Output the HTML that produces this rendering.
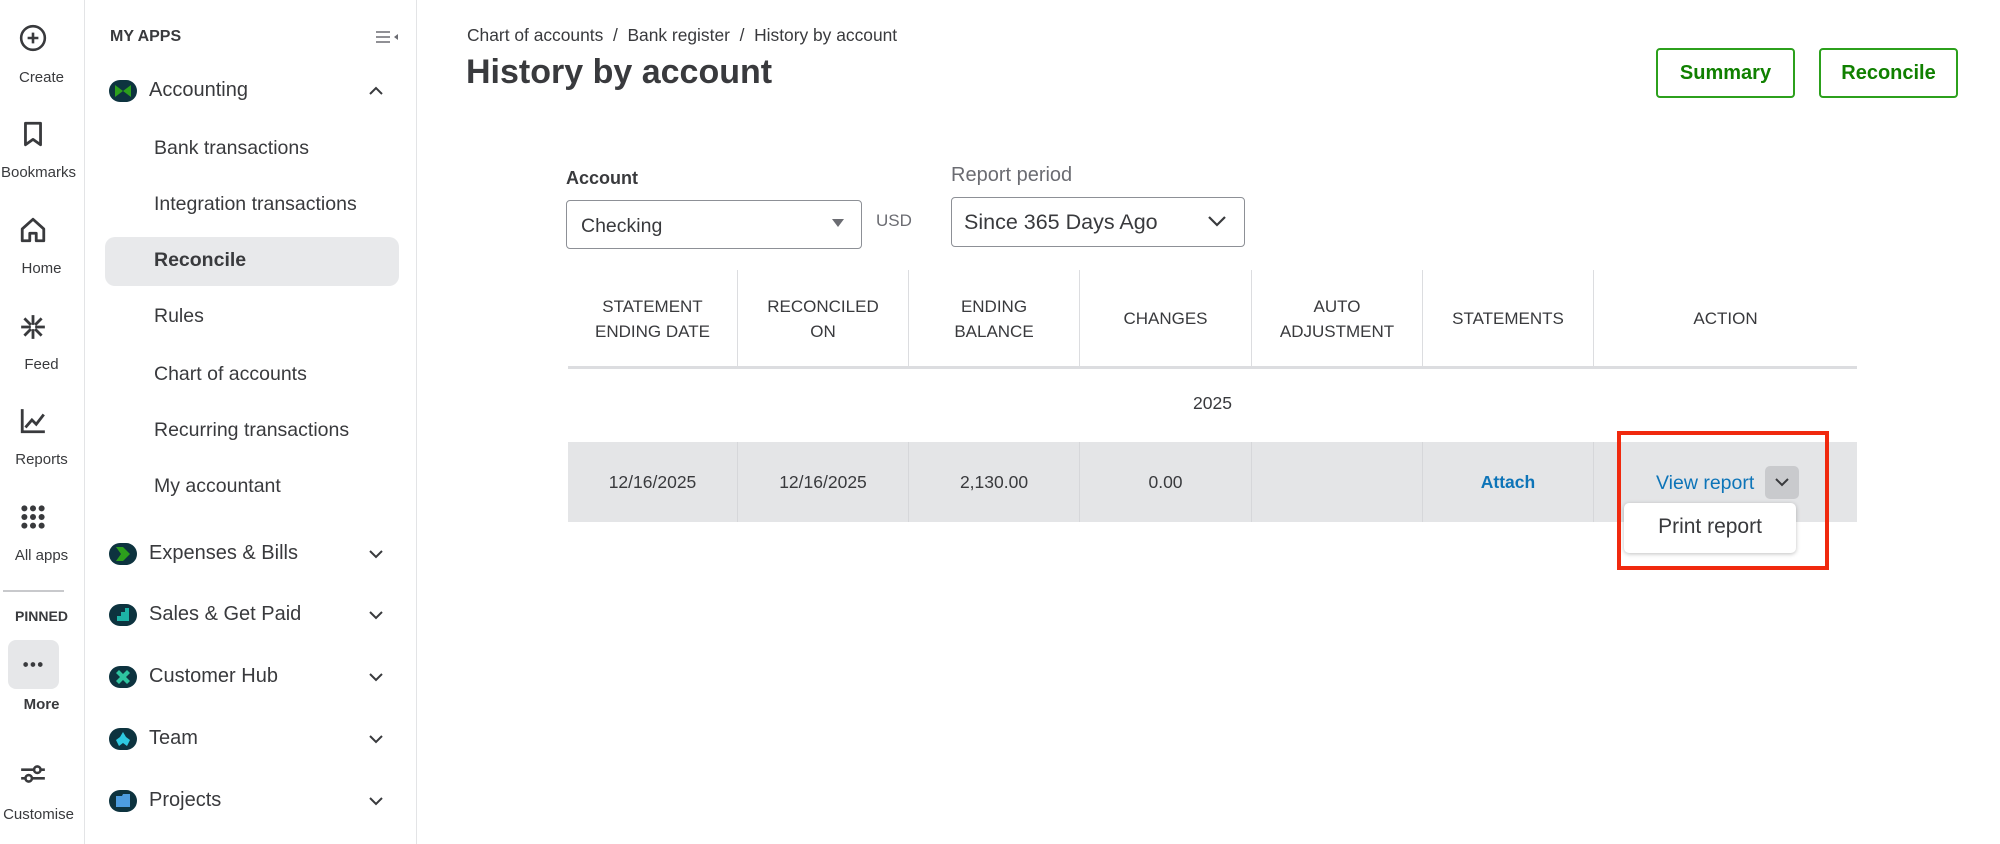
<!DOCTYPE html>
<html><head><meta charset="utf-8"><style>
*{box-sizing:border-box;margin:0;padding:0}
body{width:2000px;height:844px;background:#fff;font-family:"Liberation Sans",sans-serif;color:#393a3d;position:relative;overflow:hidden}
.abs{position:absolute}
.rail{left:0;top:0;width:85px;height:844px;border-right:1px solid #e3e4e6;background:#fff}
.rl{position:absolute;width:85px;text-align:center;font-size:15px;color:#393a3d;left:-1px}
.ic{position:absolute;left:19px;width:28px;height:28px}
.side{left:86px;top:0;width:331px;height:844px;border-right:1px solid #e3e4e6}
.si{position:absolute;left:154px;font-size:19.5px;color:#393a3d}
.app{position:absolute;left:149px;font-size:20px;color:#393a3d}
.dot{position:absolute;left:109px;width:28px;height:22px;border-radius:11px;background:#0d333f}
.chev{position:absolute;left:368px;width:16px;height:10px}
.th{position:absolute;top:270px;height:97px;display:flex;align-items:center;justify-content:center;text-align:center;font-size:17px;line-height:25px;color:#393a3d;border-left:1px solid #dcdde0}
.td{position:absolute;top:442px;height:80px;display:flex;align-items:center;justify-content:center;font-size:17.5px;color:#393a3d;border-left:1px solid #d6d7da}
.btn{position:absolute;top:48px;height:50px;width:139px;border:2px solid #2ca01c;border-radius:4px;color:#108000;font-weight:bold;font-size:20px;display:flex;align-items:center;justify-content:center}
</style></head><body>
<div class="abs rail">
 <svg class="ic" style="top:24px" viewBox="0 0 26 26"><circle cx="13" cy="13" r="11" fill="none" stroke="#393a3d" stroke-width="2.4"/><path d="M13 8v10M8 13h10" stroke="#393a3d" stroke-width="2.4"/></svg>
 <div class="rl" style="top:69px">Create</div>
 <svg class="ic" style="top:120px" viewBox="0 0 26 26"><path d="M6 3h14v20l-7-5-7 5z" fill="none" stroke="#393a3d" stroke-width="2.6" stroke-linejoin="round"/></svg>
 <div class="rl" style="top:164px;left:-4px">Bookmarks</div>
 <svg class="ic" style="top:216px" viewBox="0 0 26 26"><path d="M3 12L13 3l10 9v11h-7v-7h-6v7H3z" fill="none" stroke="#393a3d" stroke-width="2.6" stroke-linejoin="round"/></svg>
 <div class="rl" style="top:260px">Home</div>
 <svg class="ic" style="top:313px" viewBox="0 0 26 26"><path d="M13 2v9M13 15v9M2 13h9M15 13h9M5 5l6 6M21 5l-6 6M5 21l6-6M21 21l-6-6" stroke="#393a3d" stroke-width="2.6"/></svg>
 <div class="rl" style="top:356px">Feed</div>
 <svg class="ic" style="top:407px" viewBox="0 0 26 26"><path d="M3 2v21h21M6 19l6-7 4 4 7-9" fill="none" stroke="#393a3d" stroke-width="2.6"/></svg>
 <div class="rl" style="top:451px">Reports</div>
 <svg class="ic" style="top:503px" viewBox="0 0 26 26"><g fill="#393a3d"><circle cx="5" cy="5" r="2.8"/><circle cx="13" cy="5" r="2.8"/><circle cx="21" cy="5" r="2.8"/><circle cx="5" cy="13" r="2.8"/><circle cx="13" cy="13" r="2.8"/><circle cx="21" cy="13" r="2.8"/><circle cx="5" cy="21" r="2.8"/><circle cx="13" cy="21" r="2.8"/><circle cx="21" cy="21" r="2.8"/></g></svg>
 <div class="rl" style="top:547px">All apps</div>
 <div class="abs" style="left:3px;top:590px;width:61px;height:2px;background:#c8c9cc"></div>
 <div class="rl" style="top:608px;font-weight:bold;font-size:14px">PINNED</div>
 <div class="abs" style="left:8px;top:640px;width:51px;height:49px;border-radius:8px;background:#e6e7e9"></div>
 <div class="abs" style="left:22px;top:662px;width:22px;height:5px;background:radial-gradient(circle,#393a3d 2.2px,transparent 2.5px) 0 0/7.3px 5px repeat-x"></div>
 <div class="rl" style="top:696px;font-weight:bold">More</div>
 <svg class="ic" style="top:760px" viewBox="0 0 26 26"><path d="M2 9h22M2 17h22" stroke="#393a3d" stroke-width="2.4"/><circle cx="17" cy="9" r="3" fill="#fff" stroke="#393a3d" stroke-width="2.4"/><circle cx="9" cy="17" r="3" fill="#fff" stroke="#393a3d" stroke-width="2.4"/></svg>
 <div class="rl" style="top:806px;left:-4px">Customise</div>
</div>
<div class="abs side"></div>
<div class="abs" style="left:110px;top:28px;font-size:16px;font-weight:bold;color:#393a3d">MY APPS</div>
<svg class="abs" style="left:376px;top:30px" width="22" height="14" viewBox="0 0 22 14"><path d="M0 2h14M0 7h14M0 12h14" stroke="#6b6c72" stroke-width="1.6"/><path d="M22 4v6l-4-3z" fill="#6b6c72"/></svg>
<div class="abs" style="left:105px;top:237px;width:294px;height:49px;border-radius:10px;background:#e8e9eb"></div>
<div class="dot" style="top:80px"></div><svg class="abs" style="left:115px;top:85px" width="16" height="12"><path d="M0 0l8 6 8-6v12l-8-6-8 6z" fill="#2ca01c"/></svg>
<div class="app" style="top:79px">Accounting</div>
<svg class="chev" style="top:86px" viewBox="0 0 16 10"><path d="M2 8l6-6 6 6" fill="none" stroke="#393a3d" stroke-width="2"/></svg>
<div class="si" style="top:137px">Bank transactions</div>
<div class="si" style="top:193px">Integration transactions</div>
<div class="si" style="top:249px;font-weight:bold">Reconcile</div>
<div class="si" style="top:305px">Rules</div>
<div class="si" style="top:363px">Chart of accounts</div>
<div class="si" style="top:419px">Recurring transactions</div>
<div class="si" style="top:475px">My accountant</div>
<div class="dot" style="top:543px"></div><svg class="abs" style="left:116px;top:547px" width="14" height="14"><path d="M0 0h7l7 7-7 7H0l5-7z" fill="#2ca01c"/></svg>
<div class="app" style="top:542px">Expenses &amp; Bills</div>
<div class="dot" style="top:604px"></div><svg class="abs" style="left:117px;top:608px" width="12" height="13"><path d="M0 13V8h4V4h4V0h4v13z" fill="#1db3a6"/></svg>
<div class="app" style="top:603px">Sales &amp; Get Paid</div>
<div class="dot" style="top:666px"></div><svg class="abs" style="left:116px;top:670px" width="14" height="14"><path d="M0 3l3-3 4 4 4-4 3 3-4 4 4 4-3 3-4-4-4 4-3-3 4-4z" fill="#2ec4a0"/></svg>
<div class="app" style="top:665px">Customer Hub</div>
<div class="dot" style="top:728px"></div><svg class="abs" style="left:116px;top:732px" width="14" height="14"><path d="M7 0l3 5 4 3-3 6-4-3-4 3-3-6 4-3z" fill="#2ec9e0"/></svg>
<div class="app" style="top:727px">Team</div>
<div class="dot" style="top:790px"></div><svg class="abs" style="left:116px;top:794px" width="14" height="13"><path d="M0 2h6l1-2h7v13H0z" fill="#4d9de0"/></svg>
<div class="app" style="top:789px">Projects</div>
<svg class="chev" style="top:549px" viewBox="0 0 16 10"><path d="M2 2l6 6 6-6" fill="none" stroke="#393a3d" stroke-width="2"/></svg>
<svg class="chev" style="top:610px" viewBox="0 0 16 10"><path d="M2 2l6 6 6-6" fill="none" stroke="#393a3d" stroke-width="2"/></svg>
<svg class="chev" style="top:672px" viewBox="0 0 16 10"><path d="M2 2l6 6 6-6" fill="none" stroke="#393a3d" stroke-width="2"/></svg>
<svg class="chev" style="top:734px" viewBox="0 0 16 10"><path d="M2 2l6 6 6-6" fill="none" stroke="#393a3d" stroke-width="2"/></svg>
<svg class="chev" style="top:796px" viewBox="0 0 16 10"><path d="M2 2l6 6 6-6" fill="none" stroke="#393a3d" stroke-width="2"/></svg>

<div class="abs" style="left:467px;top:25px;font-size:17.4px;color:#393a3d">Chart of accounts &nbsp;/&nbsp; Bank register &nbsp;/&nbsp; History by account</div>
<div class="abs" style="left:466px;top:53px;font-size:34px;font-weight:bold;color:#393a3d">History by account</div>
<div class="btn" style="left:1656px">Summary</div>
<div class="btn" style="left:1819px">Reconcile</div>

<div class="abs" style="left:566px;top:168px;font-size:18px;font-weight:bold;color:#393a3d">Account</div>
<div class="abs" style="left:566px;top:200px;width:296px;height:49px;border:1px solid #8d9096;border-radius:4px;font-size:19.5px;padding:14px 14px;color:#393a3d">Checking</div>
<svg class="abs" style="left:832px;top:219px" width="12" height="8"><path d="M0 0h12L6 8z" fill="#6b6c72"/></svg>
<div class="abs" style="left:876px;top:211px;font-size:17px;color:#6b6c72">USD</div>
<div class="abs" style="left:951px;top:164px;font-size:20px;color:#6b6c72">Report period</div>
<div class="abs" style="left:951px;top:197px;width:294px;height:50px;border:1px solid #8d9096;border-radius:4px;font-size:21.5px;padding:12px 12px;color:#393a3d">Since 365 Days Ago</div>
<svg class="abs" style="left:1207px;top:215px" width="20" height="12"><path d="M2 2l8 8 8-8" fill="none" stroke="#393a3d" stroke-width="2.2"/></svg>

<div class="th" style="left:568px;width:169px;border-left:none">STATEMENT<br>ENDING DATE</div>
<div class="th" style="left:737px;width:171px">RECONCILED<br>ON</div>
<div class="th" style="left:908px;width:171px">ENDING<br>BALANCE</div>
<div class="th" style="left:1079px;width:172px">CHANGES</div>
<div class="th" style="left:1251px;width:171px">AUTO<br>ADJUSTMENT</div>
<div class="th" style="left:1422px;width:171px">STATEMENTS</div>
<div class="th" style="left:1593px;width:264px">ACTION</div>
<div class="abs" style="left:568px;top:366px;width:1289px;height:3px;background:#dcdde0"></div>
<div class="abs" style="left:568px;top:393px;width:1289px;text-align:center;font-size:17.5px;color:#393a3d">2025</div>
<div class="abs" style="left:568px;top:442px;width:1289px;height:80px;background:#e4e5e7"></div>
<div class="td" style="left:568px;width:169px;border-left:none">12/16/2025</div>
<div class="td" style="left:737px;width:171px">12/16/2025</div>
<div class="td" style="left:908px;width:171px">2,130.00</div>
<div class="td" style="left:1079px;width:172px">0.00</div>
<div class="td" style="left:1251px;width:171px"></div>
<div class="td" style="left:1422px;width:171px;color:#0d74b8;font-weight:bold">Attach</div>
<div class="td" style="left:1593px;width:264px"></div>
<div class="abs" style="left:1656px;top:472px;font-size:19.5px;color:#0d74b8">View report</div>
<div class="abs" style="left:1765px;top:466px;width:34px;height:33px;border-radius:5px;background:#c9cacd"></div>
<svg class="abs" style="left:1774px;top:477px" width="16" height="10"><path d="M2 2l6 6 6-6" fill="none" stroke="#393a3d" stroke-width="2"/></svg>
<div class="abs" style="left:1624px;top:503px;width:172px;height:50px;background:#fff;border-radius:5px;box-shadow:0 1px 4px rgba(0,0,0,.25);font-size:21px;color:#393a3d;padding-top:12px;text-align:center">Print report</div>
<div class="abs" style="left:1617px;top:431px;width:212px;height:139px;border:4px solid #f0290e"></div>
</body></html>
